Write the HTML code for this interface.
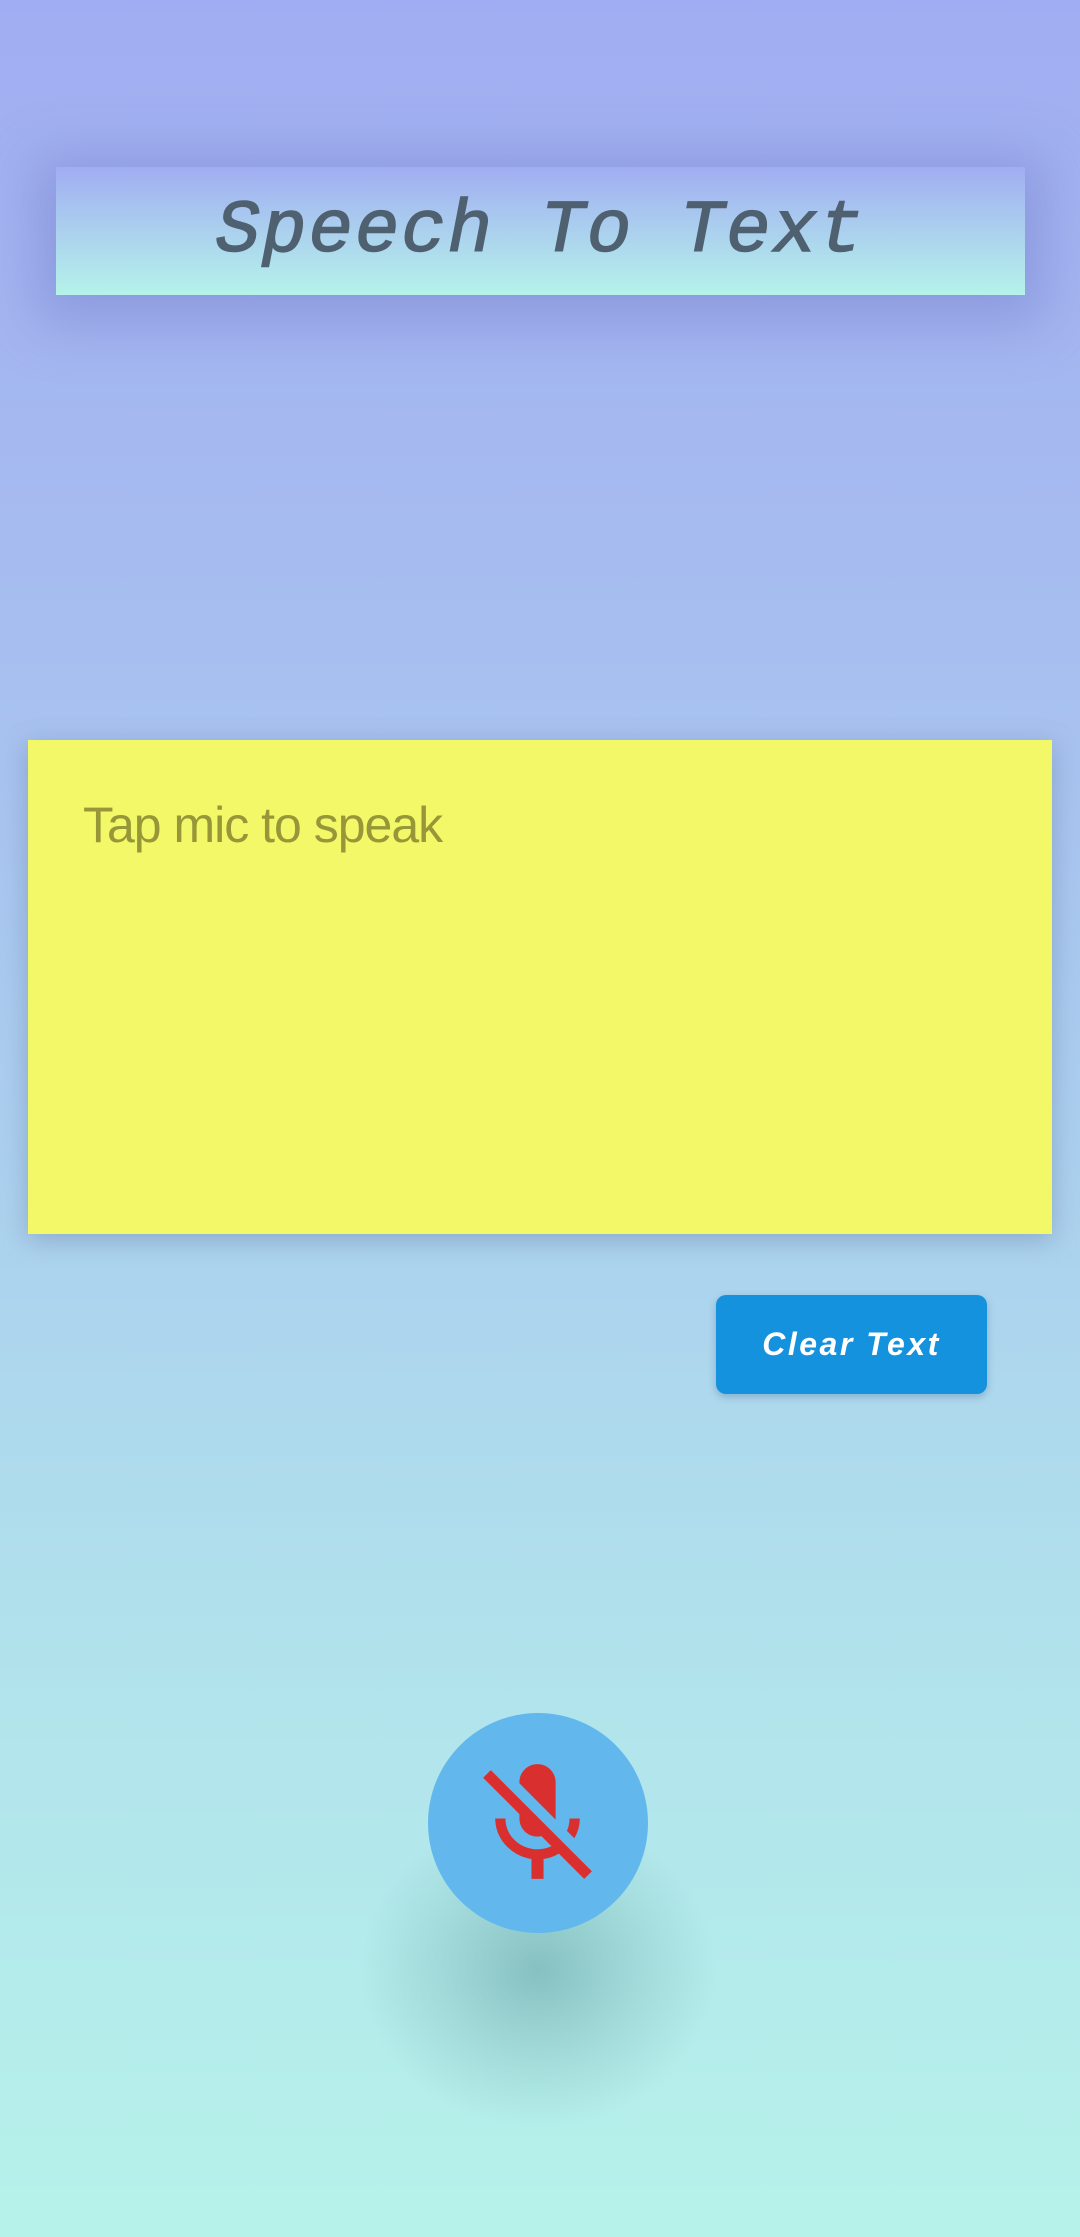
<!DOCTYPE html>
<html><head><meta charset="utf-8"><style>
html,body{margin:0;padding:0}
body{width:1080px;height:2237px;position:relative;overflow:hidden;background:linear-gradient(180deg,#a1adf2 0%,#a6bcf0 25%,#acd2ee 55%,#b1e3ec 75%,#b6f2ea 100%);font-family:"Liberation Sans",sans-serif}
.title{position:absolute;left:56px;top:167px;width:969px;height:128px;background:linear-gradient(180deg,#a1adf2,#b5f3ea);box-shadow:0 10px 50px 20px rgba(100,110,190,0.35);text-align:center;line-height:130px;font-family:"Liberation Mono",monospace;font-style:italic;font-size:74px;color:#4f6170;letter-spacing:2px;-webkit-text-stroke:1.5px #4f6170}
.box{position:absolute;left:28px;top:740px;width:1024px;height:494px;background:#f2f867;box-shadow:0 6px 24px rgba(90,110,150,0.4)}
.box span{position:absolute;left:55px;top:56px;font-size:50px;color:#979638;letter-spacing:-1px}
.btn{position:absolute;left:716px;top:1295px;width:271px;height:99px;background:#1592dd;border-radius:10px;box-shadow:0 3px 8px rgba(40,80,130,0.3);color:#fff;font-style:italic;font-weight:bold;font-size:32px;letter-spacing:2.5px;text-align:center;line-height:99px}
.sh{position:absolute;left:358px;top:1810px;width:360px;height:320px;border-radius:50%;background:radial-gradient(ellipse at center,rgba(90,150,150,0.5) 0%,rgba(110,170,170,0.25) 40%,rgba(120,180,180,0) 70%)}
.mic{position:absolute;left:428px;top:1713px;width:220px;height:220px;border-radius:50%;background:#62b8ec}
svg{position:absolute;left:465px;top:1752px}
</style></head><body>
<div class="title">Speech To Text</div>
<div class="box"><span>Tap mic to speak</span></div>
<div class="btn">Clear Text</div>
<div class="sh"></div>
<div class="mic"></div>
<svg width="145" height="145" viewBox="0 0 24 24"><path fill="#d9302f" d="M19 11h-1.7c0 .74-.16 1.43-.43 2.05l1.23 1.23c.56-.98.9-2.09.9-3.28zM14.98 11.17c0-.06.02-.11.02-.17V5c0-1.66-1.34-3-3-3S9 3.34 9 5v.18l5.98 5.99zM4.27 3L3 4.27l6.01 6.01V11c0 1.66 1.33 3 2.99 3 .22 0 .44-.03.65-.08l1.66 1.66c-.71.33-1.5.52-2.31.52-2.76 0-5.3-2.1-5.3-5.1H5c0 3.41 2.72 6.23 6 6.72V21h2v-3.28c.91-.13 1.77-.45 2.54-.9L19.73 21 21 19.730 4.27 3z"/></svg>
</body></html>
